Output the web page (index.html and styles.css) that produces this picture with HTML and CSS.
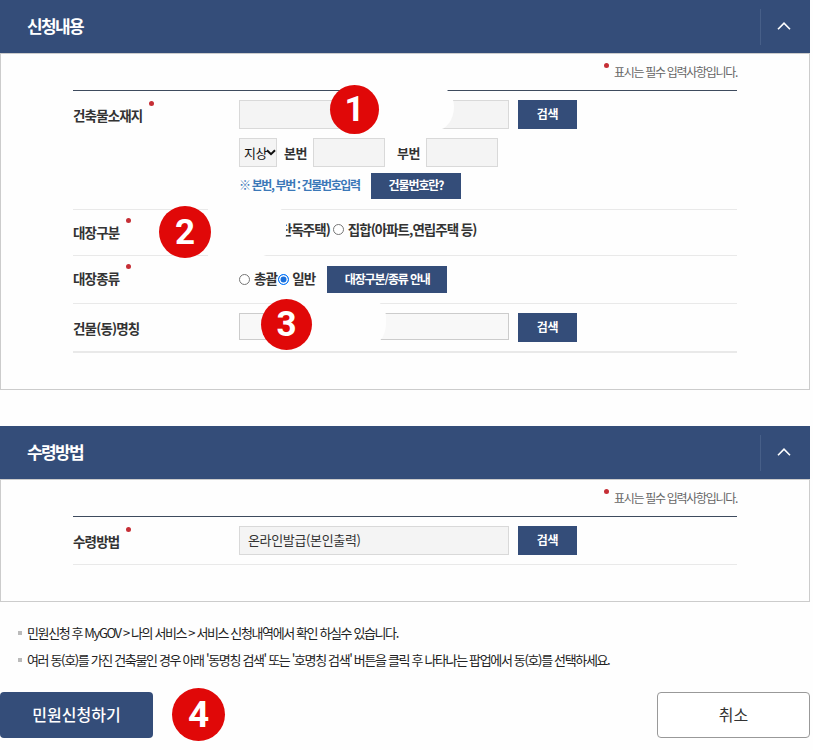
FILE: index.html
```html
<!DOCTYPE html>
<html lang="ko">
<head>
<meta charset="utf-8">
<title>민원신청</title>
<link rel="stylesheet" href="styles.css">
</head>
<body>
<main class="page">
  <section class="panel">
    <header class="panel-head">
      <h2>신청내용</h2>
      <span class="toggle"><svg width="16" height="10" viewBox="0 0 16 10"><path d="M2 8.2 8 2.2 14 8.2"/></svg></span>
    </header>
    <div class="panel-body body-apply">
      <p class="required-note">표시는 필수 입력사항입니다.</p>
      <div class="form">
        <div class="row row-address">
          <div class="label"><span class="req">건축물소재지</span></div>
          <div class="fields">
            <div class="line"><span class="input wide"></span><span class="btn search">검색</span></div>
            <div class="line line-number">
              <span class="select">지상<svg width="10" height="7" viewBox="0 0 10 7"><path d="M1 1.2 5 5.2 9 1.2"/></svg></span>
              <b class="main-no">본번</b><span class="input small"></span>
              <b class="sub-no">부번</b><span class="input small"></span>
            </div>
            <div class="line line-help"><span class="hint">※ 본번, 부번 : 건물번호입력</span><span class="btn help">건물번호란?</span></div>
          </div>
          <span class="mask mask-1"></span><span class="badge badge-1">1</span>
        </div>
        <div class="row row-class">
          <div class="label"><span class="req">대장구분</span></div>
          <div class="fields"><div class="line options house"><span>단독주택)</span><i class="radio"></i><span>집합(아파트,연립주택 등)</span></div></div>
          <span class="mask mask-2"></span><span class="badge badge-2">2</span>
        </div>
        <div class="row row-kind">
          <div class="label"><span class="req">대장종류</span></div>
          <div class="fields"><div class="line options"><i class="radio"></i><span class="choice">총괄</span><i class="radio on"></i><span class="choice">일반</span><span class="btn guide">대장구분/종류 안내</span></div></div>
        </div>
        <div class="row row-name">
          <div class="label">건물(동)명칭</div>
          <div class="fields"><div class="line"><span class="input wide light"></span><span class="btn search">검색</span></div></div>
          <span class="mask mask-3"></span><span class="badge badge-3">3</span>
        </div>
      </div>
    </div>
  </section>

  <section class="panel">
    <header class="panel-head">
      <h2>수령방법</h2>
      <span class="toggle"><svg width="16" height="10" viewBox="0 0 16 10"><path d="M2 8.2 8 2.2 14 8.2"/></svg></span>
    </header>
    <div class="panel-body body-receive">
      <p class="required-note">표시는 필수 입력사항입니다.</p>
      <div class="form">
        <div class="row row-receive">
          <div class="label"><span class="req">수령방법</span></div>
          <div class="fields"><div class="line"><span class="input wide">온라인발급(본인출력)</span><span class="btn search">검색</span></div></div>
        </div>
      </div>
    </div>
  </section>

  <ul class="notes">
    <li><span class="note-a">민원신청 후 MyGOV &gt; 나의 서비스 &gt; 서비스 신청내역에서 확인 하실수 있습니다.</span></li>
    <li><span class="note-b">여러 동(호)를 가진 건축물인 경우 아래 '동명칭 검색' 또는 '호명칭 검색' 버튼을 클릭 후 나타나는 팝업에서 동(호)를 선택하세요.</span></li>
  </ul>

  <footer class="actions">
    <span class="submit">민원신청하기</span>
    <span class="badge-4">4</span>
    <span class="cancel">취소</span>
  </footer>
</main>
</body>
</html>
```
FILE: styles.css
```css
* { box-sizing: border-box; }
body {
  margin: 0;
  background: #fefefe;
  color: #333;
  font-family: "Noto Sans CJK KR", "Noto Sans", sans-serif;
  font-size: 13px;
  white-space: nowrap;
}
.page { width: 810px; }
.panel { margin-bottom: 36px; }
.panel-head {
  display: flex;
  align-items: center;
  justify-content: space-between;
  height: 53px;
  padding-left: 27px;
  background: #344d79;
  color: #fff;
}
.panel-head h2 { margin: -2px 0 0; font-size: 17px; line-height: 24px; letter-spacing: -1.6px; }
.toggle {
  display: flex;
  align-items: center;
  justify-content: center;
  width: 50px;
  height: 36px;
  padding: 0 3px 1px 0;
  border-left: 1px solid #475f88;
}
.toggle path { fill: none; stroke: #fff; stroke-width: 1.6; }
.panel-body { padding: 0 72px; border: 1px solid #ccc; }
.body-apply { height: 337px; }
.body-receive { height: 123px; }
.required-note {
  position: relative;
  width: 124px;
  height: 36px;
  margin: 0 -1px 0 auto;
  color: #666;
  font-size: 12px;
  line-height: 35px;
  letter-spacing: -1.3px;
}
.required-note::before, .req::after {
  content: "";
  position: absolute;
  width: 5px;
  height: 5px;
  border-radius: 50%;
  background: #c62f36;
}
.required-note::before { left: -10px; top: 9px; }
.form { border-top: 1px solid #3e4b5e; }
.row {
  position: relative;
  display: grid;
  grid-template-columns: 166px 1fr;
  align-items: start;
  border-bottom: 1px solid #e9e9e9;
}
.label { font-size: 13.5px; font-weight: 700; line-height: 20px; letter-spacing: -.85px; padding-top: 12px; color: #333; }
.req { position: relative; }
.req::after { left: calc(100% + 7px); top: -4px; }
.fields { padding-top: 9px; }
.line { display: flex; align-items: center; }
.row-address { height: 119px; }
.row-address .label { padding-top: 14px; }
.row-class { height: 46px; }
.row-kind { height: 48px; }
.row-name { height: 49px; border-bottom-width: 2px; }
.row-name .label { padding-top: 14px; letter-spacing: -.85px; }
.row-receive { height: 48px; }
.row-receive .label { padding-top: 14px; }
.input, .select { height: 29px; background: #f4f4f4; border: 1px solid #d9d9d9; line-height: 26px; }
.wide { width: 270px; padding-left: 8px; letter-spacing: -.35px; }
.light { height: 27px; background: #f8f8f8; border-color: #ccc; }
.row-name .line { align-items: flex-start; }
.small { width: 72px; }
.btn {
  display: block;
  background: #344d79;
  color: #fff;
  font-size: 12px;
  font-weight: 700;
  text-align: center;
}
.search { width: 59px; height: 29px; margin-left: 9px; line-height: 28px; letter-spacing: -.3px; }
.line-number { margin-top: 9px; }
.select {
  display: flex;
  align-items: center;
  width: 38px;
  padding-left: 4px;
  color: #111;
  letter-spacing: -.5px;
}
.select svg { flex: none; margin-left: -1px; }
.select path { fill: none; stroke: #111; stroke-width: 2; }
.line b { font-weight: 700; letter-spacing: -.4px; color: #333; }
.main-no { width: 36px; padding-left: 7px; }
.sub-no { width: 41px; padding-left: 12px; }
.line-help { margin-top: 6px; }
.hint { width: 132px; color: #3b78b8; font-size: 12px; font-weight: 700; letter-spacing: -1.35px; line-height: 20px; margin-top: -2px; }
.help { width: 90px; height: 26px; line-height: 24px; letter-spacing: -1.1px; }
.options { color: #333; font-size: 13.5px; font-weight: 700; letter-spacing: -.85px; }
.radio { width: 11px; height: 11px; border: 1px solid #767676; border-radius: 50%; background: #fff; margin: 0 4px 0 0; }
.radio.on { border-color: #0075ff; background: #1a70dc; box-shadow: inset 0 0 0 1.5px #fff; margin: 0 3px 0 1px; }
.choice { margin-top: -3px; }
.house { padding-left: 41px; line-height: 20px; letter-spacing: -1px; }
.house .radio { margin: 1px 4px 0 3px; }
.guide { width: 120px; height: 27px; margin-left: 12px; line-height: 26px; letter-spacing: -1.15px; }
.row-kind .fields { padding-top: 10px; }
.mask, .badge { position: absolute; }
.mask { background: #fefefe; }
.mask-1 { left: 270px; top: -8px; width: 111px; height: 47px; border-radius: 0 24px 17px 0 / 0 24px 24px 0; }
.mask-2 { left: 135px; top: -8px; width: 78px; height: 57px; border-radius: 0 30px 44px 0 / 0 16px 24px 0; }
.mask-3 { left: 205px; top: -7px; width: 108px; height: 46px; border-radius: 0 22px 12px 0 / 0 20px 20px 0; }
.badge, .badge-4 {
  display: flex;
  align-items: center;
  justify-content: center;
  border-radius: 50%;
  background: #e00808;
  color: #fff;
  font-family: Roboto, sans-serif;
  font-size: 35px;
  font-weight: 700;
}
.badge-1 { left: 257px; top: -6px; width: 49px; height: 49px; }
.badge-2 { left: 86px; top: -4px; width: 52px; height: 52px; }
.badge-3 { left: 188px; top: -5px; width: 51px; height: 51px; }
.badge-4 { width: 53px; height: 53px; margin: -1px 0 0 19px; font-size: 37px; }
.notes { margin: -19px 0 0; padding: 0 0 0 18px; list-style: none; color: #222; }
.notes li { display: flex; align-items: center; height: 27px; letter-spacing: -1.35px; }
.notes .note-a { letter-spacing: -1.39px; }
.notes li::before { content: ""; width: 4px; height: 4px; margin-right: 5px; background: #bbb; }
.actions { display: flex; align-items: center; height: 53px; margin-top: 15px; }
.submit, .cancel {
  width: 153px;
  height: 46px;
  border-radius: 4px;
  font-size: 16px;
  line-height: 44px;
  text-align: center;
}
.submit { background: #344d79; color: #fff; font-weight: 500; }
.cancel { margin-left: auto; background: #fff; border: 1px solid #999; line-height: 42px; }
```
